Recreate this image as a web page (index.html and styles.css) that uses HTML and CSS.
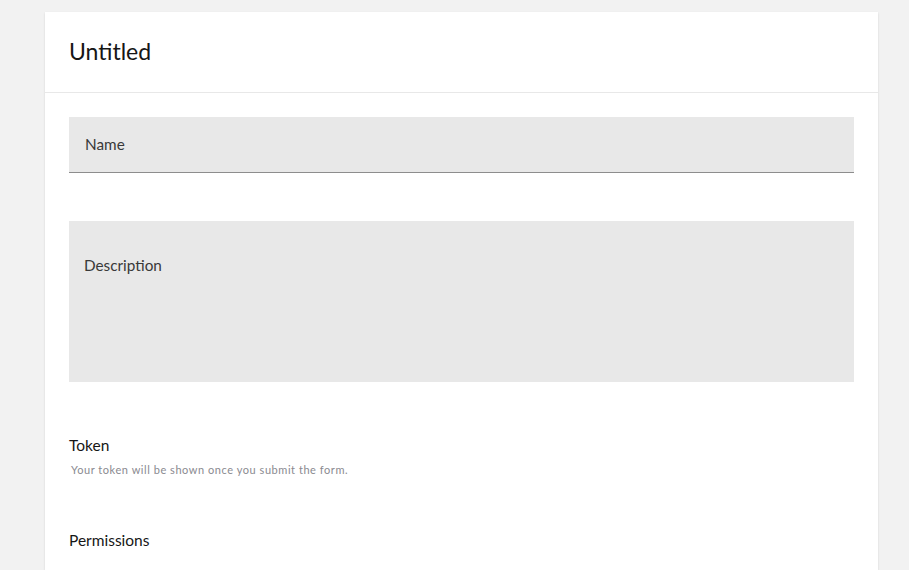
FILE: index.html
```html
<!DOCTYPE html>
<html>
<head>
<meta charset="utf-8">
<link rel="stylesheet" href="styles.css">
</head>
<body>
<div class="card">
  <div class="card-header">
    <h1 class="title">Untitled</h1>
  </div>
  <div class="card-body">
    <div class="field field-input"><span class="placeholder">Name</span></div>
    <div class="field field-area"><span class="placeholder">Description</span></div>
    <div class="section token">
      <div class="label">Token</div>
      <div class="helper">Your token will be shown once you submit the form.</div>
    </div>
    <div class="section perms">
      <div class="label">Permissions</div>
    </div>
  </div>
</div>
</body>
</html>
```

FILE: styles.css
```css
html, body {
  margin: 0;
  padding: 0;
  background: #f2f2f2;
  font-family: Lato, "Open Sans", sans-serif;
  overflow: hidden;
  height: 570px;
}
.card {
  margin: 12px 0 0 45px;
  width: 833px;
  height: 558px;
  background: #fff;
  box-shadow: 0 1px 2px rgba(0,0,0,0.12);
}
.card-header {
  height: 80px;
  border-bottom: 1px solid #e8e8e8;
  padding: 0 24px;
  display: flex;
  align-items: center;
}
.title {
  margin: 0 0 2px 0;
  font-size: 23px;
  font-weight: 400;
  color: #161616;
}
.card-body {
  padding: 24px;
}
.field {
  background: #e8e8e8;
  color: #393939;
  font-size: 15.3px;
  padding: 0 16px;
}
.field-input {
  height: 55px;
  border-bottom: 1px solid #8d8d8d;
  display: flex;
  align-items: center;
  padding-bottom: 1px;
  box-sizing: content-box;
}
.field-input {
  height: 54px;
}
.field-area {
  margin-top: 48px;
  height: 161px;
  padding-top: 35px;
  box-sizing: border-box;
  padding-left: 15px;
}
.section .label {
  font-size: 15.5px;
  color: #161616;
}
.token {
  margin-top: 54px;
}
.helper {
  margin-top: 9px;
  margin-left: 2px;
  font-size: 11px;
  letter-spacing: 0.55px;
  color: #8a8a90;
}
.perms {
  margin-top: 55px;
}
```
